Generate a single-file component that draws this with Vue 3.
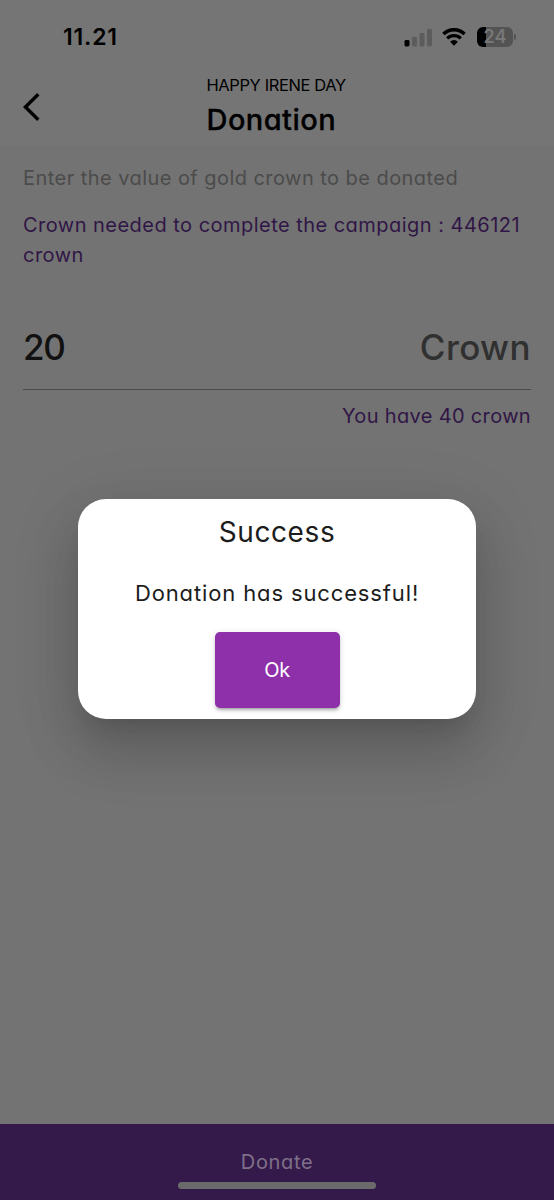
<script setup>
const title = 'Donation'
const balance = 40
const needed = 446121
const amount = 20
</script>

<template>
  <div class="screen">
    <header class="head">
      <div class="status">
        <span class="time">11.21</span>
        <div class="indicators">
          <svg class="signal" width="29" height="19" viewBox="0 0 29 19">
            <rect x="0.5" y="12" width="5" height="6.5" rx="1.4" fill="#000" />
            <rect x="8" y="9" width="5" height="9.5" rx="1.4" fill="#5c5c5c" />
            <rect x="15.5" y="5" width="5" height="13.5" rx="1.4" fill="#5c5c5c" />
            <rect x="23" y="1" width="5" height="17.5" rx="1.4" fill="#5c5c5c" />
          </svg>
          <svg class="wifi" width="24" height="18" viewBox="0 0 24 18">
            <path d="M1.4 6a15.2 15.2 0 0 1 21.2 0" fill="none" stroke="#000" stroke-width="3.4" />
            <path d="M5.2 10.4a9.7 9.7 0 0 1 13.6 0" fill="none" stroke="#000" stroke-width="3.2" />
            <path d="M8.1 13.7a5.6 5.6 0 0 1 7.8 0L12 17.8z" fill="#000" />
          </svg>
          <div class="battery">
            <span class="level">24</span>
            <i class="nub"></i>
          </div>
        </div>
      </div>
      <div class="bar">
        <svg class="back" width="20" height="30" viewBox="0 0 20 30">
          <path d="M16.3 2.2 3.4 15l12.9 12.8" fill="none" stroke="#000" stroke-width="3.4" />
        </svg>
        <div class="titles">
          <span class="event">HAPPY IRENE DAY</span>
          <h1 class="title"><span>{{ title }}</span></h1>
        </div>
      </div>
    </header>

    <main class="content">
      <p class="hint"><span>Enter the value of gold crown to be donated</span></p>
      <p class="needed">Crown needed to complete the campaign : {{ needed }} crown</p>
      <div class="field">
        <span class="amount">{{ amount }}</span>
        <span class="unit">Crown</span>
      </div>
      <p class="balance"><span>You have {{ balance }} crown</span></p>
    </main>

    <footer class="foot">
      <span class="donate">Donate</span>
      <i class="home"></i>
    </footer>

    <div class="overlay">
      <section class="dialog">
        <h2 class="success"><span>Success</span></h2>
        <p class="message"><span>Donation has successful!</span></p>
        <button class="ok"><span>Ok</span></button>
      </section>
    </div>
  </div>
</template>

<style>
body { margin: 0; background: #737373; }
</style>

<style scoped>
.screen {
  position: relative;
  display: flex;
  flex-direction: column;
  width: 554px;
  height: 1200px;
  overflow: hidden;
  background: #737373;
  font-family: Inter, "Noto Sans", sans-serif;
  font-feature-settings: "cv11" 1;
}
h1, h2, p { margin: 0; font-weight: 400; }
span { white-space: nowrap; }
.head { height: 146px; background: #757575; color: #000; }
.status {
  display: flex;
  justify-content: space-between;
  align-items: center;
  height: 74px;
  padding: 0 37px 0 63px;
  box-sizing: border-box;
}
.time { font-size: 23px; font-weight: 600; letter-spacing: 0.8px; }
.indicators { display: flex; align-items: center; }
.wifi { margin: 0 11px 0 9px; }
.battery {
  position: relative;
  display: flex;
  align-items: center;
  justify-content: center;
  width: 36px;
  height: 20px;
  margin-right: 4px;
  border-radius: 6px;
  background: linear-gradient(90deg, #000 9px, #535353 9px);
}
.level { font-size: 18px; font-weight: 600; line-height: 20px; color: #777; }
.nub {
  position: absolute;
  left: 37px;
  top: 7px;
  width: 2px;
  height: 6px;
  border-radius: 0 2px 2px 0;
  background: #535353;
}
.bar { display: flex; padding: 0 22px; }
.back { margin-top: 18px; }
.titles { display: flex; flex-direction: column; align-items: flex-start; margin-left: 164.5px; }
.event { font-size: 16.5px; line-height: 22px; letter-spacing: -0.4px; }
.title { font-size: 29px; font-weight: 500; line-height: 48px; letter-spacing: 0.45px; -webkit-text-stroke: 0.3px #000; }
.content { flex: 1; padding: 0 23px; }
.hint { margin-top: 17px; font-size: 20px; line-height: 30px; letter-spacing: 0.45px; color: #4b4b4b; }
.needed { margin: 17px -10px 0 0; font-size: 20px; line-height: 30px; letter-spacing: 0.47px; color: #301646; }
.field {
  display: flex;
  justify-content: space-between;
  align-items: center;
  height: 120px;
  padding-top: 34px;
  box-sizing: border-box;
  border-bottom: 1.5px solid #4a4a4a;
  font-size: 35px;
  font-weight: 500;
}
.amount { letter-spacing: -1.4px; color: #111; }
.unit { letter-spacing: 0.4px; color: #303030; }
.balance { margin-top: 11px; font-size: 20px; line-height: 30px; letter-spacing: 0.34px; text-align: right; color: #301646; }
.foot {
  display: flex;
  flex-direction: column;
  align-items: center;
  height: 76px;
  background: #341a4b;
}
.donate { margin-top: 23px; font-size: 20px; line-height: 30px; letter-spacing: 0.65px; color: #7f7089; }
.home { width: 198px; height: 7px; margin-top: 4.5px; border-radius: 4px; background: #6b6b6b; }
.overlay {
  position: absolute;
  inset: 0;
  display: flex;
  align-items: flex-start;
  justify-content: center;
  padding-top: 499px;
}
.dialog {
  display: flex;
  flex-direction: column;
  align-items: center;
  width: 398px;
  height: 220px;
  border-radius: 28px;
  background: #fff;
  color: #1c1c1c;
  box-shadow: 0 16px 21px -10px rgba(0, 0, 0, 0.12), 0 34px 54px 4px rgba(0, 0, 0, 0.13), 0 13px 65px 11px rgba(0, 0, 0, 0.08);
}
.success { margin-top: 13px; font-size: 28px; line-height: 40px; letter-spacing: 0.6px; }
.message { margin-top: 25px; font-size: 22px; line-height: 32px; letter-spacing: 0.87px; }
.ok {
  width: 125px;
  height: 76px;
  margin-top: 23px;
  padding: 0;
  border: 0;
  border-radius: 5px;
  background: #8e30aa;
  color: #fff;
  font: inherit;
  font-size: 20px;
  letter-spacing: -0.3px;
  box-shadow: 0 4px 2px -3px rgba(0, 0, 0, 0.2), 0 3px 3px rgba(0, 0, 0, 0.14), 0 1px 7px rgba(0, 0, 0, 0.12);
}
</style>
